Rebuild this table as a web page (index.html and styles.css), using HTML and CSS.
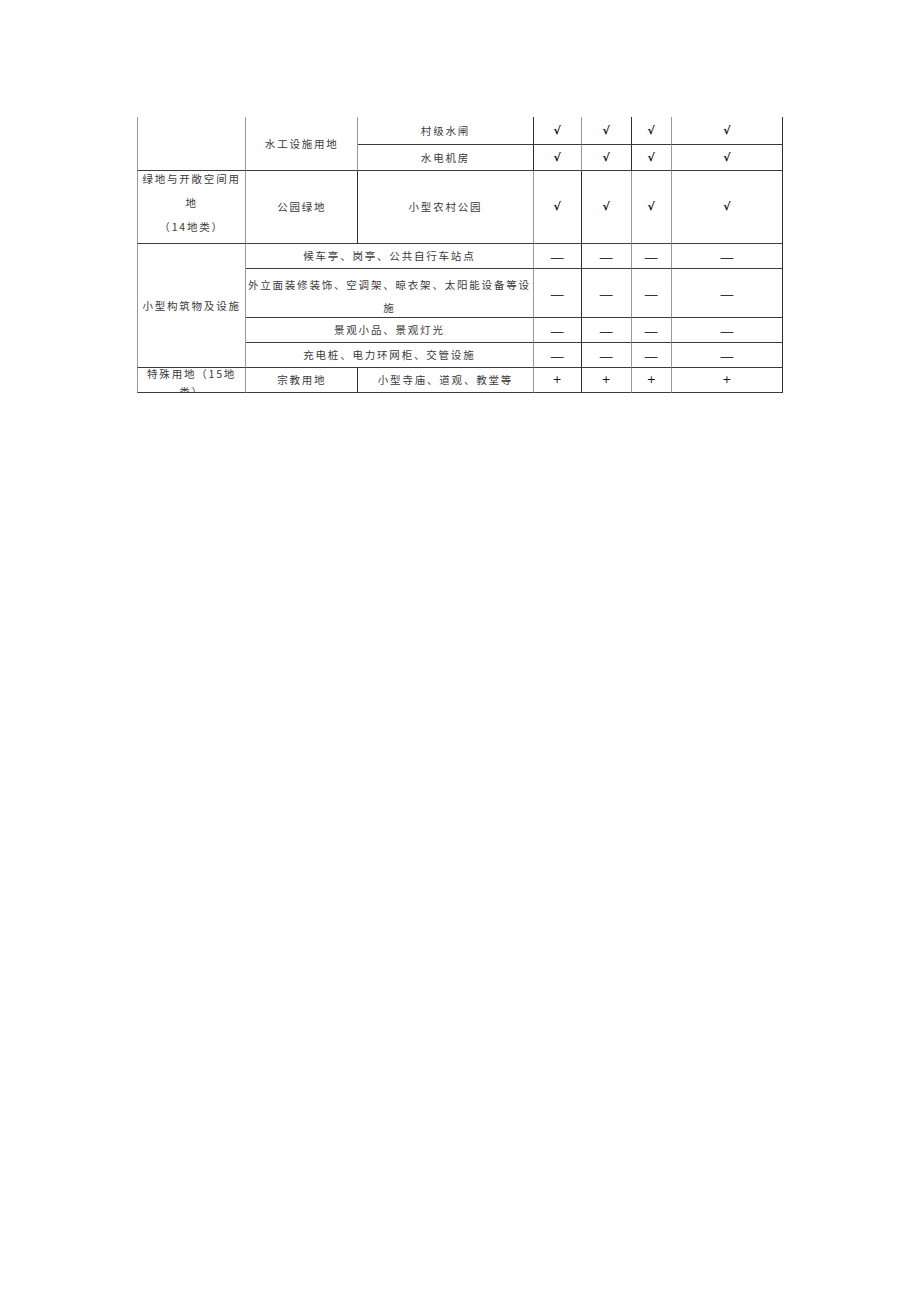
FILE: index.html
```html
<!DOCTYPE html>
<html lang="zh-CN">
<head>
<meta charset="utf-8">
<title>用地表</title>
<link rel="stylesheet" href="styles.css">
</head>
<body>
<div class="page">
<table class="grid">
<colgroup>
<col class="c1"><col class="c2"><col class="c3"><col class="c4"><col class="c5"><col class="c6"><col class="c7">
</colgroup>
<tbody>
<tr class="h28">
<td class="first g" rowspan="2"></td>
<td class="g" rowspan="2">水工设施用地</td>
<td class="d">村级水闸</td>
<td class="g mark">√</td><td class="d mark">√</td><td class="g mark">√</td><td class="d mark">√</td>
</tr>
<tr class="h26">
<td class="d">水电机房</td>
<td class="g mark">√</td><td class="d mark">√</td><td class="g mark">√</td><td class="d mark">√</td>
</tr>
<tr class="h73">
<td class="first g"><div class="up">绿地与开敞空间用地<br>（14地类）</div></td>
<td class="d">公园绿地</td>
<td class="g">小型农村公园</td>
<td class="d mark">√</td><td class="g mark">√</td><td class="g mark">√</td><td class="d mark">√</td>
</tr>
<tr class="h25">
<td class="first g" rowspan="4">小型构筑物及设施</td>
<td class="g" colspan="2">候车亭、岗亭、公共自行车站点</td>
<td class="d dash">—</td><td class="g dash">—</td><td class="g dash">—</td><td class="d dash">—</td>
</tr>
<tr class="h49">
<td class="g" colspan="2"><div class="down">外立面装修装饰、空调架、晾衣架、太阳能设备等设施</div></td>
<td class="d dash">—</td><td class="g dash">—</td><td class="g dash">—</td><td class="d dash">—</td>
</tr>
<tr class="h25">
<td class="g" colspan="2">景观小品、景观灯光</td>
<td class="d dash">—</td><td class="g dash">—</td><td class="g dash">—</td><td class="d dash">—</td>
</tr>
<tr class="h25">
<td class="g" colspan="2">充电桩、电力环网柜、交管设施</td>
<td class="d dash">—</td><td class="g dash">—</td><td class="g dash">—</td><td class="d dash">—</td>
</tr>
<tr class="h25">
<td class="first g clip"><div class="clipbox"><div class="cliptext">特殊用地（15地类）</div></div></td>
<td class="d">宗教用地</td>
<td class="g">小型寺庙、道观、教堂等</td>
<td class="d plus">+</td><td class="g plus">+</td><td class="g plus">+</td><td class="d plus">+</td>
</tr>
</tbody>
</table>
</div>
</body>
</html>
```
FILE: styles.css
```css
html, body {
  margin: 0;
  padding: 0;
  background: #ffffff;
}
.page {
  padding: 117px 0 0 137px;
}
.grid {
  border-collapse: separate;
  border-spacing: 0;
  table-layout: fixed;
  width: 646px;
  font-family: "Noto Sans CJK SC", "Noto Sans", sans-serif;
  font-size: 10.5px;
  letter-spacing: 1.8px;
  color: #3a3a3a;
}
.c1 { width: 109px; }
.c2 { width: 112px; }
.c3 { width: 175px; }
.c4 { width: 48px; }
.c5 { width: 50px; }
.c6 { width: 40px; }
.c7 { width: 111px; }
.grid td {
  padding: 0;
  text-align: center;
  vertical-align: middle;
  border-bottom: 1px solid #3c3c3c;
  line-height: 22px;
  white-space: normal;
  overflow: hidden;
}
.grid td.g { border-right: 1px solid #9a9a9a; }
.grid td.d { border-right: 1px solid #2e2e2e; }
.grid td.first { border-left: 1px solid #9a9a9a; }
.h28 { height: 28px; }
.h26 { height: 26px; }
.h25 { height: 25px; }
.h73 { height: 73px; }
.h49 { height: 49px; }
.up {
  line-height: 24px;
  margin: -4px 0 4px;
}
.down {
  line-height: 23px;
  margin: 3px 0 -3px;
}
.grid td.mark {
  font-family: "DejaVu Sans", sans-serif;
  font-weight: bold;
  font-size: 11px;
  letter-spacing: 0;
  color: #111;
}
.grid td.dash {
  font-size: 16px;
  letter-spacing: 0;
  color: #333;
  line-height: 20px;
}
.grid td.plus {
  font-family: "DejaVu Sans", sans-serif;
  font-size: 11px;
  letter-spacing: 0;
  color: #111;
}
.grid td.clip { vertical-align: top; }
.clipbox {
  height: 24px;
  overflow: hidden;
}
.cliptext {
  line-height: 18px;
  margin-top: -3px;
}
```
